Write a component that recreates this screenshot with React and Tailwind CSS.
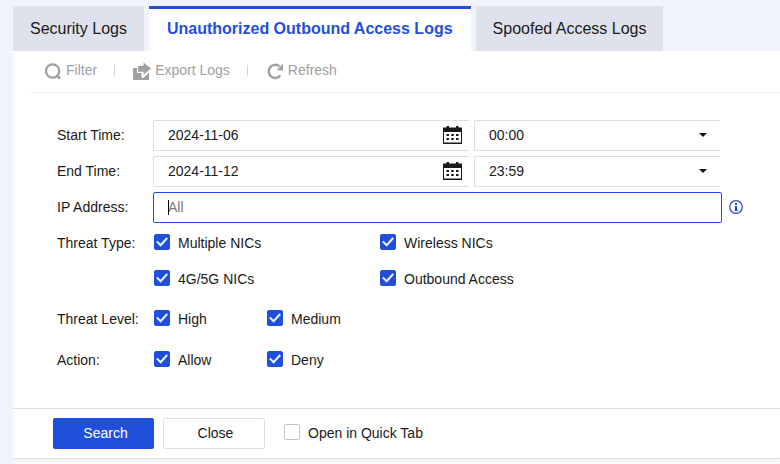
import React, { useState } from "react";

const tabs = ["Security Logs", "Unauthorized Outbound Access Logs", "Spoofed Access Logs"];

function FilterIcon() {
  return (
    <svg width="18" height="18" viewBox="0 0 18 18" fill="none" stroke="#a0a0a0" aria-hidden="true">
      <circle cx="8.6" cy="9" r="6.6" strokeWidth="2.2" />
      <path d="M12.4 13.2 16 16.6" strokeWidth="2.6" />
    </svg>
  );
}

function ExportIcon() {
  return (
    <svg width="18" height="18" viewBox="0 0 18 18" aria-hidden="true">
      <path d="M0 6h4v5h5v4l1.5 0.5L16 10v8H0z" fill="#a0a0a0" />
      <path d="M5 9.8V4h5.5V0.6L18 6.4 10.5 12.8V9.8z" fill="#a0a0a0" />
      <path d="M9 11v4.4h1.6l5-5" fill="none" stroke="#fff" strokeWidth="1" />
    </svg>
  );
}

function RefreshIcon() {
  return (
    <svg width="18" height="18" viewBox="0 0 18 18" aria-hidden="true">
      <path d="M14.4 13.6A6.6 6.6 0 1 1 13.6 4.4" fill="none" stroke="#a0a0a0" strokeWidth="2.4" />
      <path d="M17 1.8v6.4h-6.4z" fill="#a0a0a0" />
    </svg>
  );
}

function CalendarIcon() {
  return (
    <svg width="19" height="18" viewBox="0 0 19 18" aria-hidden="true">
      <path d="M0 1.5h3.5V0H6v1.5h7V0h2.5v1.5H19V18H0zM1 6v10.5h17V6z" fill="#1a1a1a" fillRule="evenodd" />
      <path
        d="M3.5 8H6v2H3.5zM8.2 8h2.5v2H8.2zM13 8h2.5v2H13zM3.5 12H6v2H3.5zM8.2 12h2.5v2H8.2zM13 12h2.5v2H13z"
        fill="#1a1a1a"
      />
    </svg>
  );
}

function InfoIcon() {
  return (
    <svg width="14" height="14" viewBox="0 0 14 14" aria-hidden="true">
      <circle cx="7" cy="7" r="6.3" fill="none" stroke="#1f4fdb" strokeWidth="1.2" />
      <path d="M6 3h2v2H6zM5.5 6H8v4h1v1H5.5v-1H6V7h-.5z" fill="#1f4fdb" />
    </svg>
  );
}

function Tool({ icon, children }) {
  return (
    <button type="button" className="flex items-center gap-1 text-[#a0a0a0]">
      {icon}
      <span className="pb-[2px]">{children}</span>
    </button>
  );
}

function Check({ label, checked = false }) {
  return (
    <label className="flex h-4 items-center gap-2">
      <span className="grid size-4 shrink-0">
        <input
          type="checkbox"
          defaultChecked={checked}
          className="peer col-start-1 row-start-1 size-4 appearance-none rounded-xs border border-[#c4c4c4] bg-white checked:border-[#1f4fdb] checked:bg-[#1f4fdb]"
        />
        <svg
          className="pointer-events-none invisible col-start-1 row-start-1 size-4 peer-checked:visible"
          viewBox="0 0 16 16"
          fill="none"
          stroke="#eef2fd"
          strokeWidth="2"
          aria-hidden="true"
        >
          <path d="M2.8 7.4 6.6 11.2 13.2 4" />
        </svg>
      </span>
      <span className="whitespace-nowrap pt-[2px] leading-4">{label}</span>
    </label>
  );
}

function TimeRow({ id, label, date, time }) {
  return (
    <div className="flex items-center">
      <label htmlFor={id} className="w-24 shrink-0 pb-px">
        {label}
      </label>
      <div className="flex gap-[5px]">
        <div className="flex h-[31px] w-[316px] items-center rounded-l-xs border border-r-0 border-[#dedede] pb-px pr-[7px]">
          <input id={id} type="text" defaultValue={date} className="min-w-0 flex-1 pl-[14px] outline-none" />
          <button type="button" aria-label={`${label} calendar`}>
            <CalendarIcon />
          </button>
        </div>
        <div className="grid h-[31px] w-[246px] items-center rounded-l-xs border border-r-0 border-[#dedede] pb-px">
          <select
            aria-label={`${label} hour`}
            defaultValue={time}
            className="col-start-1 row-start-1 w-full appearance-none bg-transparent pl-[14px] outline-none"
          >
            <option>{time}</option>
          </select>
          <svg
            className="pointer-events-none col-start-1 row-start-1 mr-[13px] justify-self-end"
            width="8"
            height="4"
            viewBox="0 0 8 4"
            aria-hidden="true"
          >
            <path d="M0 0h8L4 4z" fill="#111" />
          </svg>
        </div>
      </div>
    </div>
  );
}

function CheckGroup({ label, children }) {
  return (
    <fieldset className="flex items-start">
      <legend className="float-left w-[97px] shrink-0 pt-px leading-4">{label}</legend>
      {children}
    </fieldset>
  );
}

export default function App() {
  const [active, setActive] = useState(1);

  return (
    <div className="min-h-screen bg-[#f0f3fc] pl-[13px] pt-[6px] font-['Liberation_Sans',Arial,sans-serif] text-sm text-[#1a1a1a]">
      <nav className="flex gap-[5px] text-base" role="tablist">
        {tabs.map((tab, i) => (
          <button
            key={tab}
            type="button"
            role="tab"
            aria-selected={i === active}
            onClick={() => setActive(i)}
            className={
              i === active
                ? "h-[45px] whitespace-nowrap border-t-3 border-[#1f4fdb] bg-white px-[18px] pb-[3px] font-bold text-[#1f4fdb]"
                : "h-[45px] whitespace-nowrap bg-[#dee2ed] px-[17px]"
            }
          >
            {tab}
          </button>
        ))}
      </nav>

      <main className="bg-white">
        <div className="ml-[18px] flex h-[42px] items-center border-b border-[#f2f2f2] pb-[2px] pl-[13px]">
          <Tool icon={<FilterIcon />}>Filter</Tool>
          <span className="ml-[17px] mr-[18px] h-[11px] w-px bg-[#d5d5d5]" />
          <Tool icon={<ExportIcon />}>Export Logs</Tool>
          <span className="ml-[17px] mr-[18px] h-[11px] w-px bg-[#d5d5d5]" />
          <Tool icon={<RefreshIcon />}>Refresh</Tool>
        </div>

        <form onSubmit={(e) => e.preventDefault()}>
          <div className="flex flex-col gap-[5px] pb-10 pl-11 pt-[27px]">
            <TimeRow id="start" label="Start Time:" date="2024-11-06" time="00:00" />
            <TimeRow id="end" label="End Time:" date="2024-11-12" time="23:59" />
            <div className="flex items-center">
              <label htmlFor="ip" className="w-24 shrink-0 pb-px">
                IP Address:
              </label>
              <div className="relative w-[569px]">
                <input
                  id="ip"
                  type="text"
                  placeholder="All"
                  className="h-[31px] w-full rounded-xs border border-[#1f4fdb] pb-px pl-[14px] outline-none placeholder:text-[#7a7a7a]"
                />
                <span className="absolute left-[15px] top-2 h-[15px] w-px bg-black" />
              </div>
              <button type="button" aria-label="IP address help" className="ml-[7px] pb-px">
                <InfoIcon />
              </button>
            </div>

            <div className="flex flex-col gap-6 pt-[6px]">
              <CheckGroup label="Threat Type:">
                <div className="grid grid-cols-[226px_226px] gap-y-5">
                  <Check label="Multiple NICs" checked />
                  <Check label="Wireless NICs" checked />
                  <Check label="4G/5G NICs" checked />
                  <Check label="Outbound Access" checked />
                </div>
              </CheckGroup>
              <CheckGroup label="Threat Level:">
                <div className="grid grid-cols-[113px_113px]">
                  <Check label="High" checked />
                  <Check label="Medium" checked />
                </div>
              </CheckGroup>
              <CheckGroup label="Action:">
                <div className="grid grid-cols-[113px_113px]">
                  <Check label="Allow" checked />
                  <Check label="Deny" checked />
                </div>
              </CheckGroup>
            </div>
          </div>

          <div className="flex items-start border-y border-[#dcdeea] py-[9px] pl-10">
            <button type="submit" className="h-[31px] w-[101px] rounded-xs bg-[#1f4fdb] pb-px pl-1 text-white">
              Search
            </button>
            <button
              type="button"
              className="ml-[9px] mr-[19px] h-[31px] w-[102px] rounded-xs border border-[#dedede] pb-px pl-[3px]"
            >
              Close
            </button>
            <div className="pt-[6px]">
              <Check label="Open in Quick Tab" />
            </div>
          </div>
        </form>
        <div className="h-[5px] bg-linear-to-b from-[#f3f3f5] to-[#fcfcfd]" />
      </main>
    </div>
  );
}
